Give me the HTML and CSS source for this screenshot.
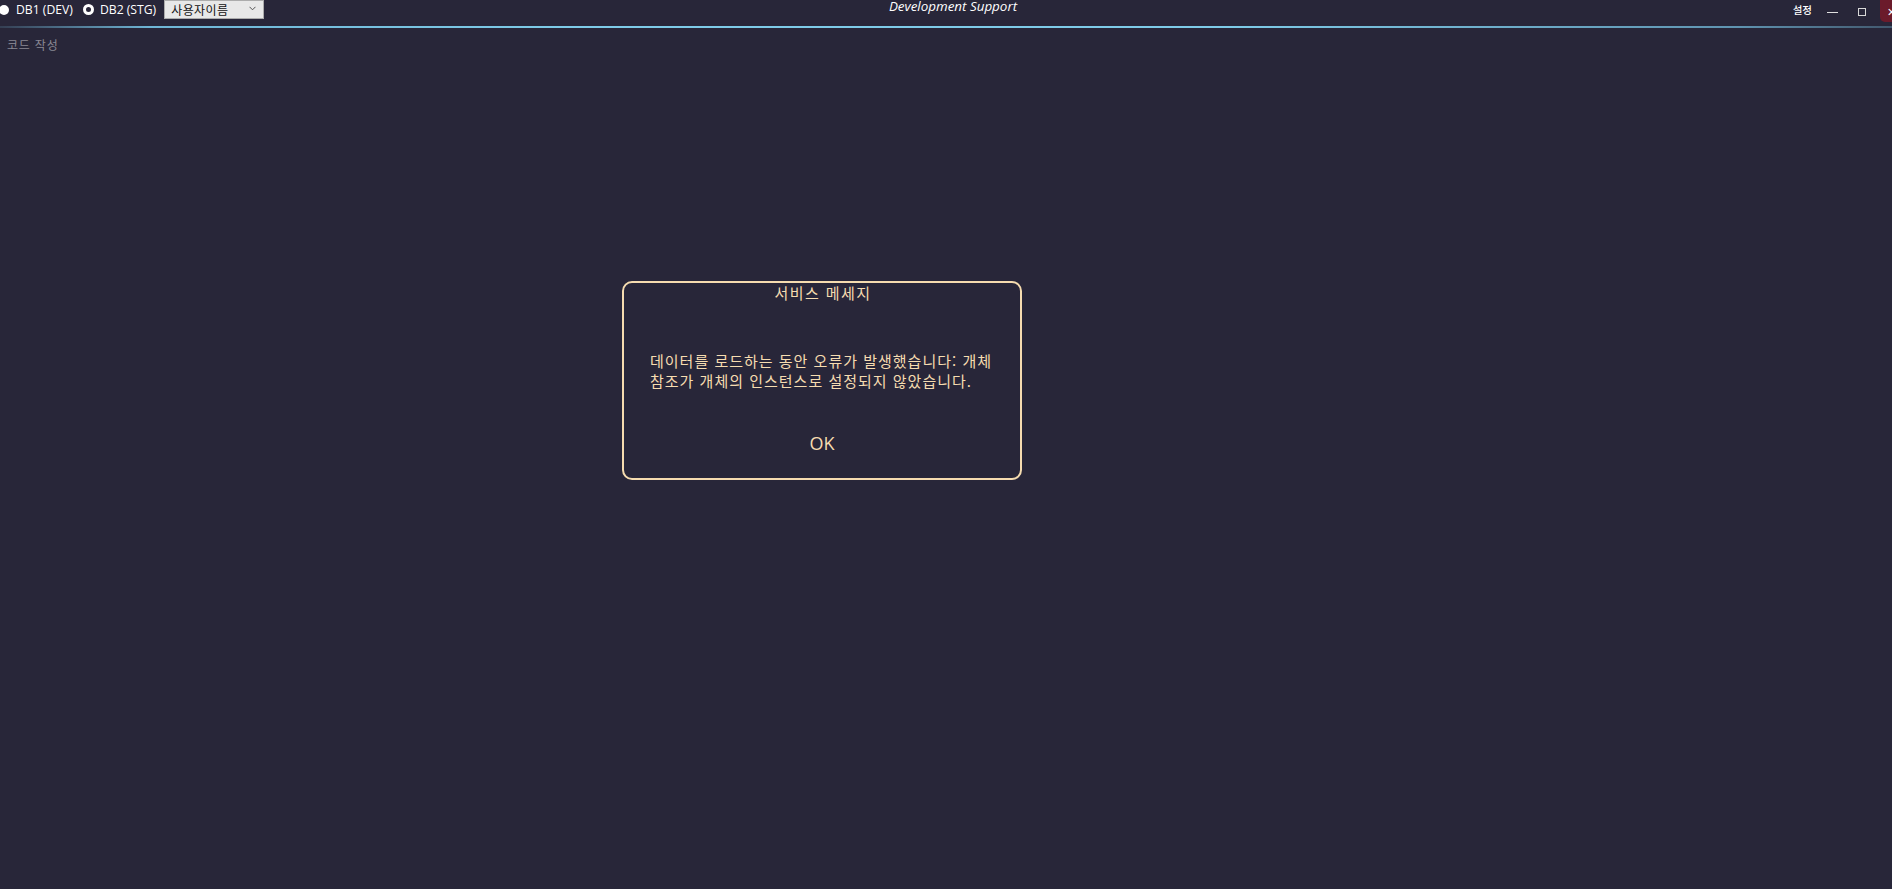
FILE: index.html
```html
<!DOCTYPE html>
<html lang="ko">
<head>
<meta charset="utf-8">
<title>Development Support</title>
<link rel="stylesheet" href="styles.css">
</head>
<body>
<div class="app">
  <header class="titlebar">
    <div class="left">
      <label class="radio"><span class="dot filled"></span><span class="lbl">DB1 (DEV)</span></label>
      <label class="radio"><span class="dot ring"></span><span class="lbl">DB2 (STG)</span></label>
      <div class="combo"><span class="combo-text">사용자이름</span><svg class="chev" width="7" height="5" viewBox="0 0 7 5"><path d="M0.5 0.8 L3.5 3.8 L6.5 0.8" fill="none" stroke="#555" stroke-width="1"/></svg></div>
    </div>
    <div class="title">Development Support</div>
    <div class="right">
      <span class="settings">설정</span>
      <span class="winbtn min"><span class="minline"></span></span>
      <span class="winbtn max"><span class="maxbox"></span></span>
      <span class="winbtn close">✕</span>
    </div>
  </header>
  <div class="accent"></div>
  <main class="content">
    <div class="tab">코드 작성</div>
  </main>
  <div class="dialog">
    <div class="dlg-title">서비스 메세지</div>
    <div class="dlg-msg">데이터를 로드하는 동안 오류가 발생했습니다: 개체<br>참조가 개체의 인스턴스로 설정되지 않았습니다.</div>
    <div class="dlg-ok">OK</div>
  </div>
</div>
</body>
</html>
```

FILE: styles.css
```css
html, body {
  margin: 0;
  padding: 0;
  width: 100%;
  height: 100%;
  background: #282639;
  overflow: hidden;
}
body {
  font-family: "Open Sans", "Noto Sans CJK KR", sans-serif;
  color: #ffffff;
}
.app {
  position: relative;
  width: 1892px;
  height: 889px;
  display: flex;
  flex-direction: column;
}
.titlebar {
  height: 26px;
  display: flex;
  align-items: flex-start;
  position: relative;
}
.left {
  display: flex;
  align-items: center;
  height: 19px;
  margin-left: -1px;
}
.radio {
  display: flex;
  align-items: center;
  font-size: 12.2px;
  color: #ffffff;
  margin-right: 9px;
}
.radio + .radio {
  margin-right: 8px;
}
.dot {
  width: 10px;
  height: 10px;
  border-radius: 50%;
  box-sizing: border-box;
  margin-right: 7px;
}
.dot.filled {
  background: #ffffff;
}
.dot.ring {
  width: 11px;
  height: 11px;
  border: 3px solid #ffffff;
  background: #282639;
  margin-right: 6px;
  margin-left: 1px;
}
.combo {
  width: 100px;
  height: 19px;
  box-sizing: border-box;
  background: #e8e8e8;
  border: 1px solid #acacac;
  display: flex;
  align-items: center;
  justify-content: space-between;
  padding: 0 7px 0 6px;
}
.combo-text {
  font-family: "Noto Sans CJK KR", sans-serif;
  font-size: 12px;
  letter-spacing: 0.4px;
  color: #111;
  line-height: 17px;
}
.chev {
  margin-top: -3px;
}
.title {
  position: absolute;
  left: 0;
  right: 0;
  top: -3px;
  text-align: center;
  font-style: italic;
  font-size: 13.4px;
  color: #ffffff;
  pointer-events: none;
  padding-left: 14px;
}
.right {
  margin-left: auto;
  display: flex;
  align-items: flex-start;
  height: 22px;
}
.settings {
  font-family: "Noto Sans CJK KR", sans-serif;
  font-size: 10.5px;
  font-weight: 500;
  line-height: 20px;
  margin-right: 15px;
}
.winbtn {
  display: flex;
  align-items: center;
  justify-content: center;
  height: 22px;
}
.min {
  width: 11px;
  margin-right: 20px;
}
.minline {
  width: 11px;
  height: 1px;
  background: #e0e0e0;
  margin-top: 2px;
}
.max {
  width: 8px;
  margin-right: 14px;
}
.maxbox {
  width: 8px;
  height: 8px;
  box-sizing: border-box;
  border: 1px solid #d8d8d8;
  margin-top: 2px;
}
.close {
  width: 26px;
  background: #6b1b2b;
  border-bottom-left-radius: 5px;
  font-size: 11px;
  color: #ffffff;
  justify-content: flex-start;
  padding-left: 7px;
  box-sizing: border-box;
  margin-right: -14px;
}
.accent {
  height: 2px;
  background: linear-gradient(to right, rgba(126, 203, 232, 0.15), #6fb6d6 8%, #7ecbe8 30%, #7ecbe8 65%, #5f93b0 92%, rgba(126, 203, 232, 0.3));
}
.content {
  flex: 1;
  padding: 9px 7px;
}
.tab {
  font-family: "Noto Sans CJK KR", sans-serif;
  font-size: 12px;
  letter-spacing: 0.8px;
  color: #8a8894;
  line-height: 16px;
}
.dialog {
  position: absolute;
  left: 622px;
  top: 281px;
  width: 400px;
  height: 199px;
  box-sizing: border-box;
  border: 2px solid #f6dcb0;
  border-radius: 10px;
  background: #282639;
  display: flex;
  flex-direction: column;
  padding: 0 20px 0 26px;
  color: #f6dcb0;
}
.dlg-title {
  font-family: "Noto Sans CJK KR", sans-serif;
  font-size: 15px;
  letter-spacing: 1.4px;
  line-height: 20px;
  text-align: center;
  padding-right: 4px;
}
.dlg-msg {
  font-family: "Noto Sans CJK KR", sans-serif;
  font-size: 15px;
  letter-spacing: 1px;
  line-height: 20px;
  margin-top: 48px;
  white-space: nowrap;
}
.dlg-ok {
  font-size: 18px;
  line-height: 24px;
  text-align: center;
  margin-top: 40px;
  padding-right: 6px;
}
```
